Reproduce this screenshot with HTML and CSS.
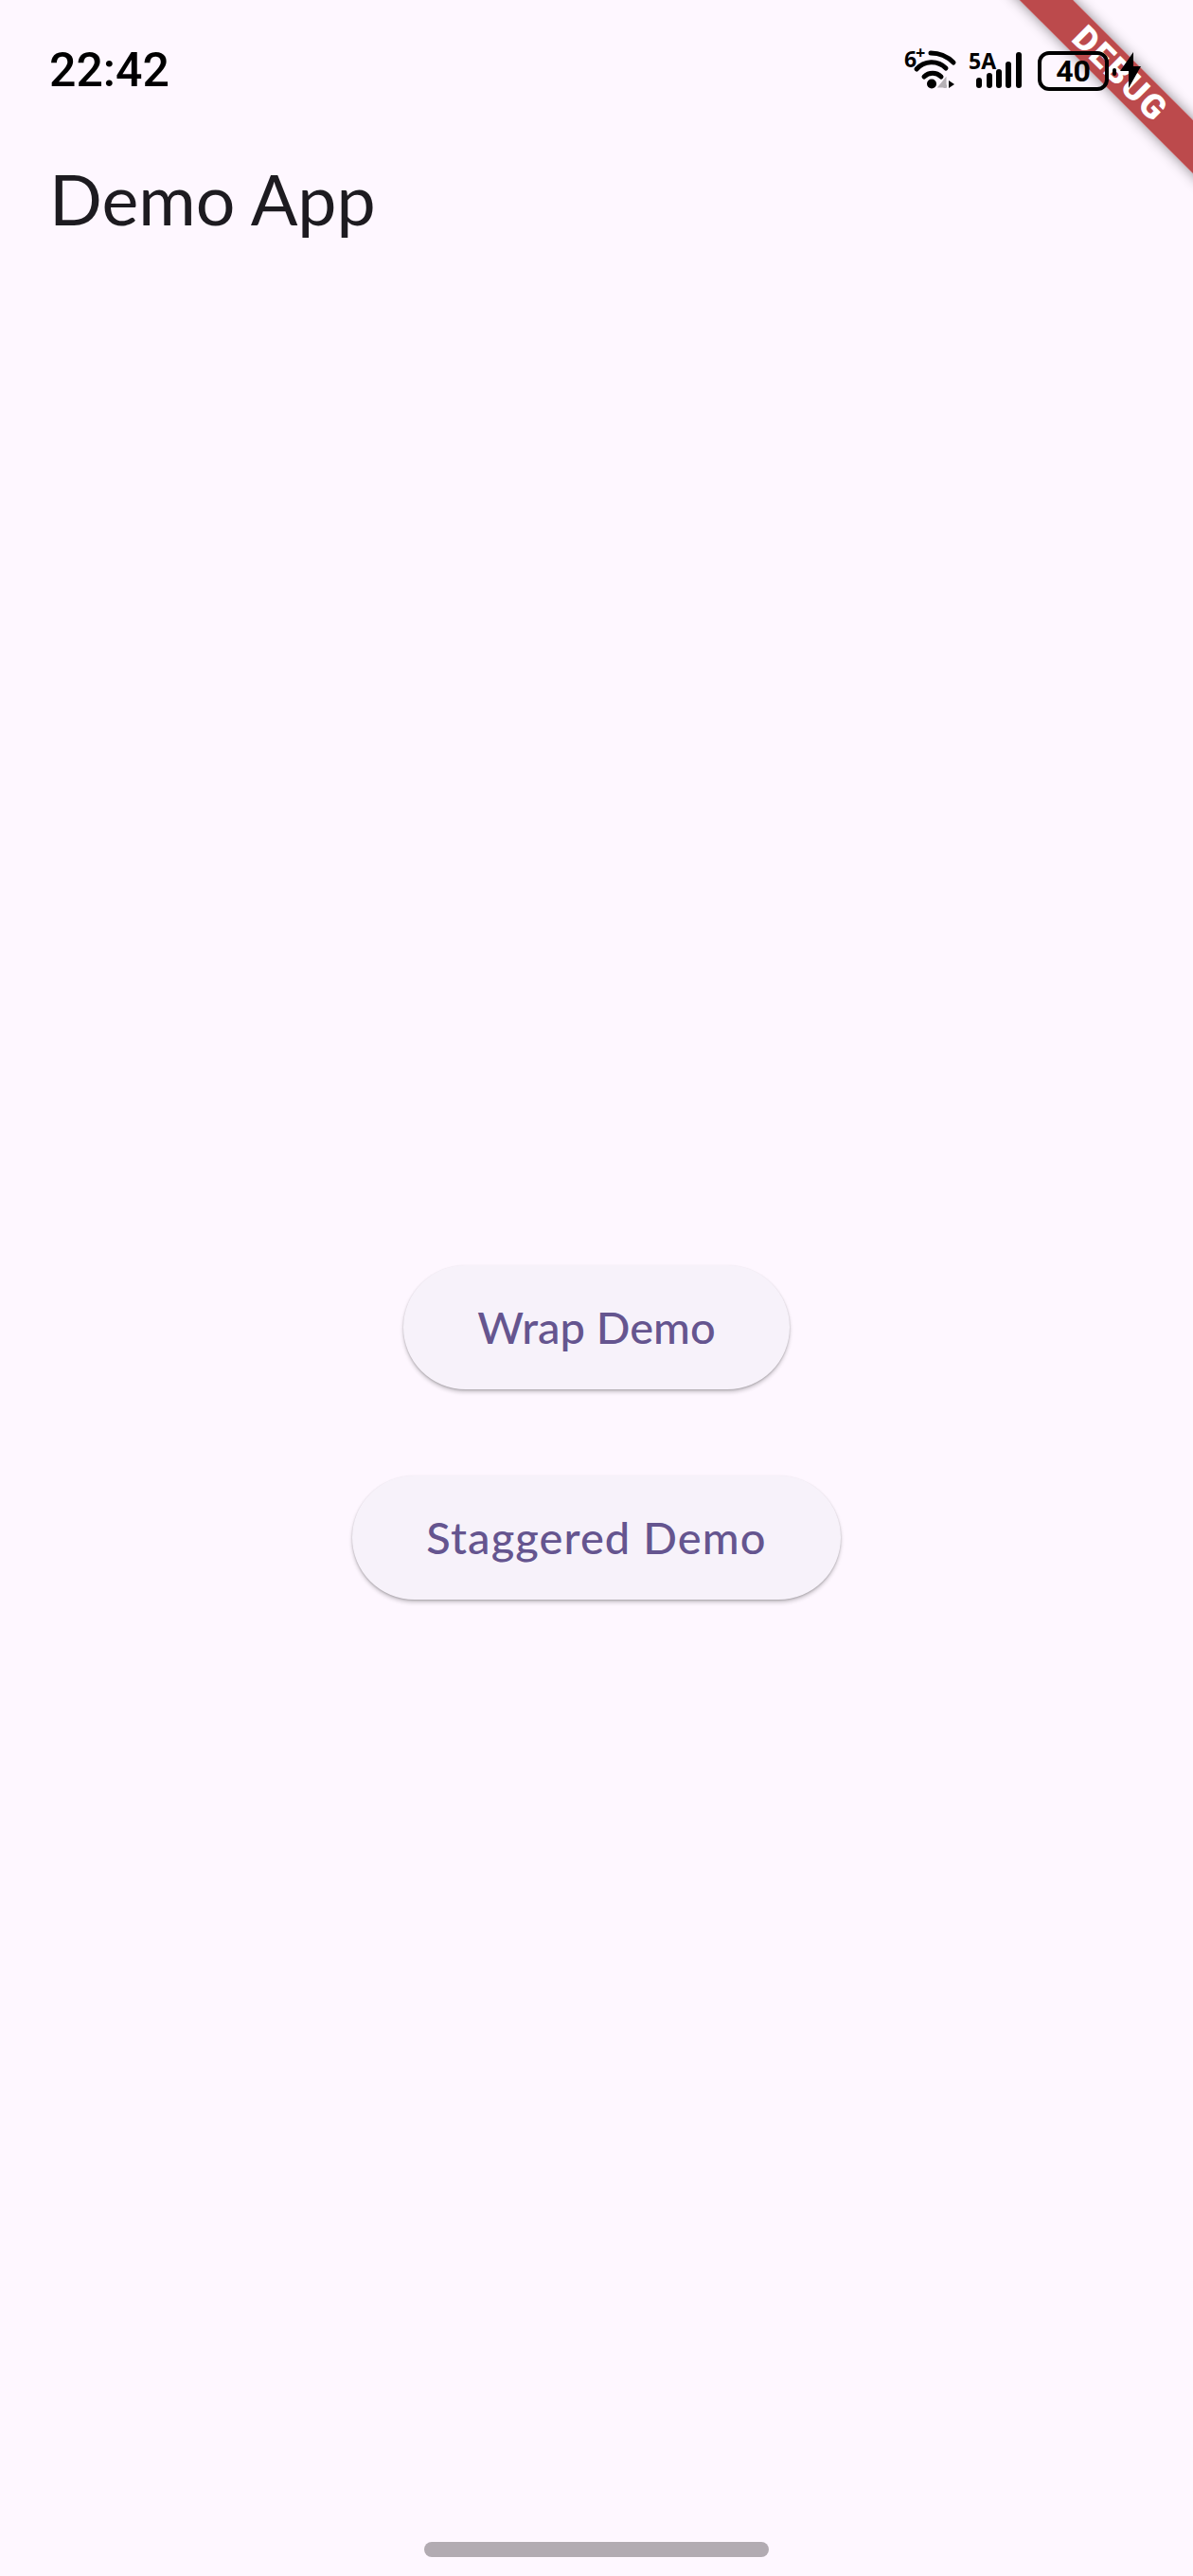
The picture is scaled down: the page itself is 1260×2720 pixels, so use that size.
FILE: index.html
```html
<!doctype html>
<html lang="en">
<head>
<meta charset="UTF-8">
<meta name="viewport" content="width=device-width,initial-scale=1">
<title>Demo App</title>
<link rel="stylesheet" href="styles.css">
</head>
<body>

<!-- status bar -->
<div class="statusbar">
  <span class="clock">22:42</span>
  <div class="status-icons">
    <svg class="ic-wifi" width="68" height="58" viewBox="0 -12 68 58">
      <text x="1" y="21" class="ic-small">6</text>
      <text x="13" y="12" class="ic-plus">+</text>
      <path d="M29 6C38 6 47 10 53 16" class="arc"/>
      <path d="M14 23C22 14 36 13 45 22" class="arc"/>
      <path d="M22 31C27 26 35 26 40 31" class="arc"/>
      <circle cx="30" cy="38.5" r="5"/>
      <path d="M44 43V35l-5 6h7" class="gray"/>
      <path d="M48 35l6 4-6 4z"/>
    </svg>
    <svg class="ic-signal" width="58" height="58" viewBox="0 -12 58 58">
      <text x="1" y="23" class="ic-small">5A</text>
      <rect x="9" y="32" width="6" height="11" rx="3"/>
      <rect x="20" y="27" width="6" height="16" rx="3"/>
      <rect x="30" y="23" width="6" height="20" rx="3"/>
      <rect x="40" y="15" width="6" height="28" rx="3"/>
      <rect x="51" y="5" width="6" height="38" rx="3"/>
    </svg>
    <div class="battery"><span>40</span></div>
    <svg class="ic-bolt" width="34" height="46" viewBox="0 0 34 46">
      <rect x="4" y="22" width="4" height="8" rx="2"/>
      <path d="M26 5L12 25h9v18L34 20h-8z"/>
    </svg>
  </div>
</div>

<!-- app bar -->
<header class="appbar">Demo App</header>

<!-- content -->
<main class="content">
  <button class="pill">Wrap Demo</button>
  <button class="pill pill-wide">Staggered Demo</button>
</main>

<div class="homebar"><div class="handle"></div></div>

<!-- debug ribbon -->
<div class="corner"><div class="ribbon">DEBUG</div></div>

</body>
</html>
```

FILE: styles.css
```css
html,body{margin:0;padding:0;height:100%}
body{
  display:flex;flex-direction:column;
  height:2720px;
  background:#fef7ff;
  font-family:Lato,"Noto Sans",sans-serif;
  overflow:hidden;
}

/* status bar (system layer, sits above the ribbon) */
.statusbar{
  position:relative;z-index:2;
  height:136px;flex:none;box-sizing:border-box;
  display:flex;align-items:flex-start;justify-content:space-between;
  padding:48px 55px 0 52px;
}
.clock{font:500 50px/50px Roboto,sans-serif;color:#000;padding-top:1px}
.status-icons{display:flex;align-items:flex-start;padding-top:2px}
.status-icons svg{display:block;fill:#000}
.ic-wifi,.ic-signal{margin-top:-12px}
.ic-small{font:700 23px "Noto Sans",sans-serif}
.ic-plus{font:700 18px "Noto Sans",sans-serif}
.arc{fill:none;stroke:#000;stroke-width:5;stroke-linecap:round}
.status-icons .gray{fill:none;stroke:#b5b0b5;stroke-width:3}
.ic-signal{margin-right:16px}
.battery{
  box-sizing:border-box;width:75px;height:42px;margin-top:4px;
  border:4px solid #000;border-radius:12px;
  display:flex;align-items:center;justify-content:center;
  font:700 32px/1 Roboto,sans-serif;color:#000;
}

/* app bar */
.appbar{
  flex:none;height:168px;box-sizing:border-box;padding:0 0 20px 52px;
  display:flex;align-items:center;
  font-size:73.5px;line-height:1;color:#1d1b20;
}

/* centred buttons */
.content{
  flex:1;
  display:flex;flex-direction:column;align-items:center;justify-content:center;
  gap:91px;
}
.pill{
  height:131px;padding:0 78px;
  border:0;border-radius:66px;
  background:#f7f2fa;color:#65558f;
  font:500 47px/1 Lato,"Noto Sans",sans-serif;
  box-shadow:0 3px 4px rgba(0,0,0,.2),0 1px 2px rgba(0,0,0,.18);
}
.pill-wide{letter-spacing:1.1px}

/* gesture bar */
.homebar{position:absolute;left:0;right:0;top:2684px;display:flex;justify-content:center}
.handle{width:364px;height:16px;border-radius:8px;background:#b2abb2}

/* flutter debug ribbon */
.corner{position:absolute;top:0;right:0;width:240px;height:240px;overflow:hidden}
.ribbon{
  position:absolute;left:-37px;top:58px;width:400px;height:40px;
  transform:rotate(45deg);
  background:rgba(160,0,0,.7);
  box-shadow:0 0 14px rgba(0,0,0,.45);
  color:#fff;text-align:center;
  font:900 36px/40px Roboto,sans-serif;letter-spacing:2px;
}
```
